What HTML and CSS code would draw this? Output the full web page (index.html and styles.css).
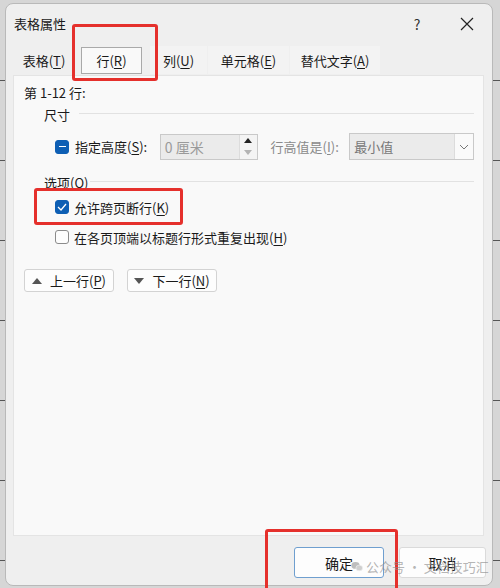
FILE: index.html
```html
<!DOCTYPE html>
<html>
<head>
    <meta charset="utf-8" />
    <title>表格属性</title>
    <link rel="stylesheet" href="styles.css">
</head>
<body>
    <section id="dialog">
        <div class="titlebar">
            <span class="title">表格属性</span>
            <span class="help">?</span>
            <span class="close">
                <svg width="14" height="14" viewBox="0 0 14 14"><path d="M1 1 L13 13 M13 1 L1 13" stroke="#222" stroke-width="1.2" fill="none" /></svg>
            </span>
        </div>
        <div class="tabs">
            <div class="tab tab-table">表格(<u>T</u>)</div>
            <div class="tab tab-row active">行(<u>R</u>)</div>
            <div class="tab tab-col">列(<u>U</u>)</div>
            <div class="tab tab-cell">单元格(<u>E</u>)</div>
            <div class="tab tab-alt">替代文字(<u>A</u>)</div>
        </div>
        <div class="panel">
            <div class="rows-title">第 1-12 行:</div>

            <div class="group-head"><span>尺寸</span><i class="rule"></i></div>
            <div class="group-body">
                <div class="size-row">
                    <span class="box mixed"><i></i></span>
                    <span class="lbl lbl-height">指定高度(<u>S</u>):</span>
                    <div class="num">
                        <span class="num-val">0 厘米</span>
                        <span class="spin">
                            <i class="up"></i>
                            <i class="down"></i>
                        </span>
                    </div>
                    <span class="lbl lbl-rule">行高值是(<u>I</u>):</span>
                    <div class="select">
                        <span class="select-val">最小值</span>
                        <span class="select-arrow">
                            <svg width="10" height="6" viewBox="0 0 10 6"><path d="M1 1 L5 5 L9 1" stroke="#777" stroke-width="1" fill="none" /></svg>
                        </span>
                    </div>
                </div>
            </div>

            <div class="group-head opts"><span>选项(<u>O</u>)</span><i class="rule"></i></div>
            <div class="group-body">
                <div class="check-row first">
                    <span class="box checked">
                        <svg width="10" height="8" viewBox="0 0 10 8"><path d="M1 4 L4 7 L9 1" stroke="#fff" stroke-width="1.3" fill="none" /></svg>
                    </span>
                    <span class="lbl">允许跨页断行(<u>K</u>)</span>
                </div>
                <div class="check-row">
                    <span class="box"></span>
                    <span class="lbl">在各页顶端以标题行形式重复出现(<u>H</u>)</span>
                </div>
            </div>

            <div class="nav">
                <button class="btn"><i class="tri tri-up"></i>上一行(<u>P</u>)</button>
                <button class="btn"><i class="tri tri-down"></i>下一行(<u>N</u>)</button>
            </div>
        </div>
        <div class="footer">
            <button class="btn btn-ok">确定</button>
            <button class="btn btn-cancel">取消</button>
        </div>
    </section>

    <!-- annotations drawn over the screenshot -->
    <div class="mark mark-tab"></div>
    <div class="mark mark-check"></div>
    <div class="mark mark-ok"></div>

    <div class="watermark">
        <svg width="12" height="11" viewBox="0 0 16 13"><ellipse cx="6" cy="5" rx="5.5" ry="4.5" fill="#bdbdbd" /><ellipse cx="11" cy="8.5" rx="4.5" ry="3.8" fill="#cfcfcf" stroke="#f4f4f4" stroke-width="0.8" /></svg>
        <span>公众号 · 文档技巧汇</span>
    </div>
</body>
</html>
```

FILE: styles.css
```css
*{
    padding:0;
    margin:0;
    box-sizing:border-box;
}
body{
    width:500px;
    height:588px;
    overflow:hidden;
    position:relative;
    font-family:"Noto Sans CJK SC","Liberation Sans",sans-serif;
    font-size:13px;
    color:#1a1a1a;
    background-color:#d6d6d6;
    background-image:repeating-linear-gradient(to bottom, transparent 0, transparent 78px, #555 78px, #555 79px, transparent 79px, transparent 80px);
    background-position:0 2px;
}
u{
    text-decoration:underline;
    text-underline-offset:2px;
}
#dialog{
    margin:3px 0 0 5px;
    width:488px;
    height:583px;
    background:#efefef;
    border:1px solid #b9b9b9;
    border-radius:8px;
    display:flex;
    flex-direction:column;
}
.titlebar{
    height:42px;
    display:flex;
    align-items:center;
    padding:0 0 3px 8px;
}
.title{
    flex-grow:1;
}
.help{
    width:20px;
    text-align:center;
    margin-right:33px;
    font-size:14px;
    color:#333;
}
.close{
    width:14px;
    height:14px;
    margin-right:18px;
    display:flex;
}
.tabs{
    height:29px;
    display:flex;
    align-items:stretch;
    padding:0 0 1px 7px;
}
.tab{
    display:flex;
    align-items:center;
    justify-content:center;
}
.tab-table{
    width:62px;
}
.tab-row{
    width:61px;
    margin:1px 0 0 6px;
    border:1px solid #a9a9a9;
    background:#f9f9f9;
}
.tab-col{
    width:57px;
    margin-left:8px;
    background:#f3f3f3;
}
.tab-cell{
    width:81px;
    margin-left:1px;
    background:#f3f3f3;
}
.tab-alt{
    width:90px;
    margin-left:1px;
    background:#f3f3f3;
}
.panel{
    height:461px;
    margin:0 8px 0 7px;
    background:#f9f9f9;
    border:1px solid #e4e4e4;
    padding:7px 9px 0 10px;
}
.rows-title{
    height:20px;
    line-height:20px;
}
.group-head{
    height:22px;
    display:flex;
    align-items:center;
    margin-left:20px;
}
.group-head .rule{
    flex-grow:1;
    border-top:1px solid #e2e2e2;
    margin:0 0 1px 9px;
}
.group-head.opts{
    margin-top:11px;
}
.group-head.opts .rule{
    margin-left:2px;
}
.group-body{
    padding-left:31px;
}
.size-row{
    display:flex;
    align-items:center;
    height:27px;
    margin-top:8px;
}
.box{
    width:14px;
    height:14px;
    border:1px solid #8b8b8b;
    border-radius:3px;
    background:#fdfdfd;
    display:flex;
    align-items:center;
    justify-content:center;
    flex-shrink:0;
}
.box.mixed,
.box.checked{
    background:#0e5fb4;
    border-color:#0e5fb4;
}
.box.mixed i{
    width:7px;
    height:1.5px;
    background:#fff;
}
.lbl{
    margin-left:6px;
    white-space:nowrap;
}
.lbl-height{
    width:85px;
}
.num{
    width:98px;
    height:26px;
    border:1px solid #c9c9c9;
    background:#ebebeb;
    display:flex;
}
.num-val{
    flex-grow:1;
    padding-left:4px;
    line-height:24px;
    color:#9a9a9a;
    font-size:14px;
}
.spin{
    width:18px;
    display:flex;
    flex-direction:column;
    background:#f4f4f4;
    border-left:1px solid #dcdcdc;
}
.spin i{
    flex-grow:1;
    display:flex;
    align-items:center;
    justify-content:center;
}
.spin i::after{
    content:"";
    border-left:4px solid transparent;
    border-right:4px solid transparent;
}
.spin .up::after{
    border-bottom:5px solid #222;
}
.spin .down::after{
    border-top:5px solid #b4b4b4;
}
.lbl-rule{
    margin-left:13px;
    width:79px;
    color:#8a8a8a;
}
.select{
    width:125px;
    height:27px;
    border:1px solid #c9c9c9;
    background:#ebebeb;
    display:flex;
}
.select-val{
    flex-grow:1;
    padding-left:4px;
    line-height:25px;
    color:#777;
}
.select-arrow{
    width:19px;
    background:#fafafa;
    border-left:1px solid #dcdcdc;
    display:flex;
    align-items:center;
    justify-content:center;
}
.check-row{
    display:flex;
    align-items:center;
    height:22px;
    margin-top:8px;
}
.check-row.first{
    margin-top:3px;
}
.check-row .lbl{
    margin-left:5px;
}
.nav{
    display:flex;
    gap:13px;
    margin-top:21px;
}
.btn{
    font-family:inherit;
    font-size:13px;
    color:#1a1a1a;
    background:#fdfdfd;
    border:1px solid #d3d3d3;
    border-radius:3px;
    height:23px;
    width:90px;
    display:flex;
    align-items:center;
    justify-content:center;
}
.tri{
    margin-right:8px;
    border-left:5px solid transparent;
    border-right:5px solid transparent;
}
.tri-up{
    border-bottom:6px solid #555;
}
.tri-down{
    border-top:6px solid #555;
}
.footer{
    display:flex;
    justify-content:flex-end;
    gap:15px;
    padding:11px 6px 0 0;
}
.btn-ok,
.btn-cancel{
    height:31px;
    font-size:14px;
}
.btn-ok{
    width:90px;
    border-color:#6f9fcf;
}
.btn-cancel{
    width:87px;
    border-color:#dadada;
}
.mark{
    position:absolute;
    border:3px solid #e5302c;
    border-radius:3px;
}
.mark-tab{
    left:72px;
    top:24px;
    width:86px;
    height:57px;
}
.mark-check{
    left:34px;
    top:188px;
    width:149px;
    height:37px;
}
.mark-ok{
    left:265px;
    top:529px;
    width:133px;
    height:64px;
}
.watermark{
    position:absolute;
    left:351px;
    top:557px;
    display:flex;
    align-items:center;
    gap:3px;
    font-size:13px;
    color:rgba(140,140,140,0.65);
    white-space:nowrap;
}
```
